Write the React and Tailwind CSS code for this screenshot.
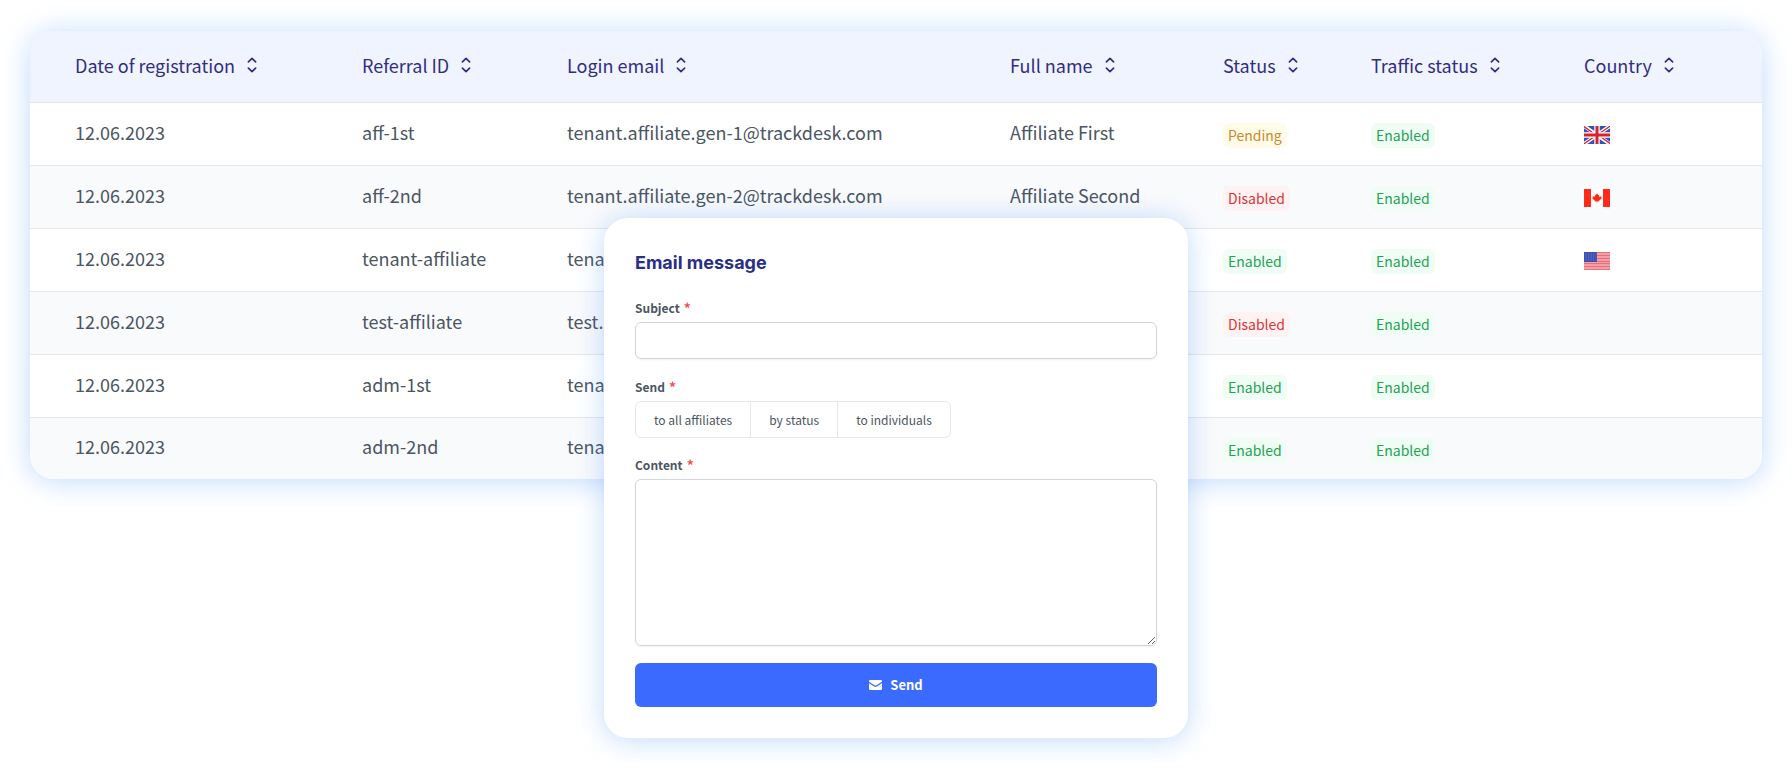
const COLUMNS = [
  { label: "Date of registration", width: "w-[287px]" },
  { label: "Referral ID", width: "w-[205px]" },
  { label: "Login email", width: "w-[443px]" },
  { label: "Full name", width: "w-[213px]" },
  { label: "Status", width: "w-[148px]" },
  { label: "Traffic status", width: "w-[213px]" },
  { label: "Country", width: "w-[223px]" },
];

const ROWS = [
  { id: "aff-1st", email: "tenant.affiliate.gen-1@trackdesk.com", name: "Affiliate First", status: "Pending", flag: "gb" },
  { id: "aff-2nd", email: "tenant.affiliate.gen-2@trackdesk.com", name: "Affiliate Second", status: "Disabled", flag: "ca" },
  { id: "tenant-affiliate", email: "tena", name: "", status: "Enabled", flag: "us" },
  { id: "test-affiliate", email: "test.", name: "", status: "Disabled" },
  { id: "adm-1st", email: "tena", name: "", status: "Enabled" },
  { id: "adm-2nd", email: "tena", name: "", status: "Enabled" },
];

const BADGE = {
  Pending: "bg-[#fefce8] text-[#ca8a2c]",
  Disabled: "bg-[#fef2f2] text-[#dc3535]",
  Enabled: "bg-[#f0fdf4] text-[#22a355]",
};

function SortIcon() {
  return (
    <svg className="h-4 w-[10px] shrink-0" viewBox="0 0 10 16" fill="none" stroke="currentColor" strokeWidth="1.7" strokeLinecap="round" strokeLinejoin="round" aria-hidden="true">
      <path d="M1.4 4.8 5 1.4 8.6 4.8M1.4 11.2 5 14.6 8.6 11.2" />
    </svg>
  );
}

function Badge({ value }) {
  return (
    <span className={`inline-block rounded-md px-[5px] py-0.5 text-sm leading-[21px] ${BADGE[value]}`}>{value}</span>
  );
}

function Flag({ code }) {
  if (code === "gb") {
    return (
      <svg className="h-[18px] w-[26px]" viewBox="0 0 26 18" role="img" aria-label="United Kingdom">
        <path fill="#2f56b4" d="M0 0h26v18H0z" />
        <path stroke="#fff" strokeWidth="3.6" d="m0 0 26 18M26 0 0 18" />
        <path stroke="#d8232f" strokeWidth="1.3" d="m0 .6 11 7.6M26 .2 15 7.8M0 17.8l11-7.6M26 17.4l-11-7.6" />
        <path stroke="#fff" strokeWidth="5.4" d="M13 0v18M0 9h26" />
        <path stroke="#d8232f" strokeWidth="3" d="M13 0v18M0 9h26" />
      </svg>
    );
  }
  if (code === "ca") {
    return (
      <svg className="h-[18px] w-[26px]" viewBox="0 0 26 18" role="img" aria-label="Canada">
        <path fill="#fff" d="M0 0h26v18H0z" />
        <path fill="#ff2a1a" d="M0 0h7v18H0zM19 0h7v18h-7z" />
        <path fill="#ff2a1a" d="m13 4.2 1.1 1.9 1.1-.5-.3 2.3 1.3-1 .3.8 1.2-.1-.5 1.4.6.4-2.6 2.2.2.9-2.1-.2v1.5h-.6v-1.5l-2.1.2.2-.9-2.6-2.2.6-.4-.5-1.4 1.2.1.3-.8 1.3 1-.3-2.3 1.1.5z" />
      </svg>
    );
  }
  return (
    <svg className="h-[18px] w-[26px]" viewBox="0 0 26 18" role="img" aria-label="United States">
      <path fill="#f0a0a6" d="M0 0h26v18H0z" />
      <path stroke="#e4707a" strokeWidth="1" d="M0 .5h26M0 3.5h26M0 6.5h26M0 9.5h26M0 11.5h26M0 14.5h26M0 17.5h26" />
      <path fill="#3f4fb0" d="M0 0h13v10H0z" />
      <path stroke="#7d8ad0" strokeWidth=".8" strokeDasharray="1 1.6" d="M1.5 2h11M1.5 4h11M1.5 6h11M1.5 8h11" />
    </svg>
  );
}

function Label({ children, ...props }) {
  return (
    <label className="flex h-5 gap-1 text-xs leading-5 font-bold text-[#4b5563]" {...props}>
      {children}
      <span className="text-sm leading-5 text-[#f05252]">*</span>
    </label>
  );
}

function AffiliateTable() {
  return (
    <div className="overflow-hidden rounded-3xl bg-white shadow-[0_2px_28px_rgba(59,140,246,0.32)]">
      <table className="w-full table-fixed border-collapse text-left text-lg leading-7 text-[#4b5563]">
        <thead className="bg-[#f0f4ff] text-[#312e81]">
          <tr className="h-[71px]">
            {COLUMNS.map((c) => (
              <th key={c.label} scope="col" className={`${c.width} pb-0.5 pl-[45px] font-normal whitespace-nowrap`}>
                <button type="button" className="flex items-center gap-3">
                  {c.label}
                  <SortIcon />
                </button>
              </th>
            ))}
          </tr>
        </thead>
        <tbody>
          {ROWS.map((r) => (
            <tr key={r.id} className="h-[63px] border-t border-[#e5e7eb] last:h-[62px] even:bg-[#f9fafc]">
              <td className="pb-1 pl-[45px]">12.06.2023</td>
              <td className="pb-1 pl-[45px] whitespace-nowrap">{r.id}</td>
              <td className="pb-1 pl-[45px] whitespace-nowrap">{r.email}</td>
              <td className="pb-1 pl-[45px] whitespace-nowrap">{r.name}</td>
              <td className="pl-[45px]"><Badge value={r.status} /></td>
              <td className="pl-[45px]"><Badge value="Enabled" /></td>
              <td className="pt-0.5 pl-[45px]">{r.flag && <Flag code={r.flag} />}</td>
            </tr>
          ))}
        </tbody>
      </table>
    </div>
  );
}

function EmailDialog() {
  return (
    <form
      onSubmit={(e) => e.preventDefault()}
      className="absolute top-[218px] left-1/2 w-[584px] max-w-full -translate-x-1/2 rounded-3xl bg-white px-[31px] pt-[31px] pb-[31px] shadow-[0_2px_28px_rgba(59,140,246,0.32)]"
      aria-labelledby="dialog-title"
    >
      <h2 id="dialog-title" className="font-[Inter,sans-serif] text-lg leading-7 font-bold text-[#2a2f86]">Email message</h2>
      <div className="mt-[21px]">
        <Label htmlFor="subject">Subject</Label>
        <input id="subject" type="text" className="mt-1 block h-[37px] w-full rounded-md border border-[#d1d5db] px-3 text-sm shadow-xs" />
      </div>
      <div className="mt-[18px]">
        <Label id="send-label" htmlFor="send-all">Send</Label>
        <div role="group" aria-labelledby="send-label" className="mt-1 flex h-[37px] w-fit divide-x divide-[#e5e7eb] rounded-md border border-[#e5e7eb] text-xs text-[#4b5563]">
          <button id="send-all" type="button" className="px-[18px]">to all affiliates</button>
          <button type="button" className="px-[18px]">by status</button>
          <button type="button" className="px-[18px]">to individuals</button>
        </div>
      </div>
      <div className="mt-[17px]">
        <Label htmlFor="content">Content</Label>
        <textarea id="content" className="mt-1 block h-[167px] w-full resize rounded-md border border-[#d1d5db] px-3 py-2 text-sm shadow-xs" />
      </div>
      <button type="submit" className="mt-[17px] flex h-11 w-full items-center justify-center gap-2 rounded-md bg-[#3b6aff] text-[13px] font-bold text-white">
        <svg className="h-[10px] w-[13px]" viewBox="0 0 13 10" fill="currentColor" aria-hidden="true">
          <path d="M1.2 0h10.6A1.2 1.2 0 0 1 13 1.2v.6L7.4 5.3a1.8 1.8 0 0 1-1.8 0L0 1.8v-.6A1.2 1.2 0 0 1 1.2 0ZM0 3.3l5.2 3.3a2.6 2.6 0 0 0 2.6 0L13 3.3v5.5a1.2 1.2 0 0 1-1.2 1.2H1.2A1.2 1.2 0 0 1 0 8.8Z" />
        </svg>
        Send
      </button>
    </form>
  );
}

export default function App() {
  return (
    <main className="relative min-h-screen bg-white px-[30px] pt-[31px] font-['Noto_Sans_CJK_SC',sans-serif]">
      <AffiliateTable />
      <EmailDialog />
    </main>
  );
}
